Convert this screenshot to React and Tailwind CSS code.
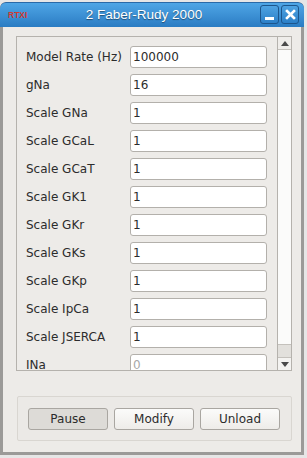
import React from "react";

const rows = [
  ["Model Rate (Hz)", "100000"],
  ["gNa", "16"],
  ["Scale GNa", "1"],
  ["Scale GCaL", "1"],
  ["Scale GCaT", "1"],
  ["Scale GK1", "1"],
  ["Scale GKr", "1"],
  ["Scale GKs", "1"],
  ["Scale GKp", "1"],
  ["Scale IpCa", "1"],
  ["Scale JSERCA", "1"],
  ["INa", "0", true],
];

const font = { fontFamily: '"DejaVu Sans", sans-serif' };

export default function App() {
  return (
    <div className="w-[307px] h-[458px] bg-[#e6e6e6] pt-[2px]" style={font}>
      <div className="w-[304px] h-[453px] flex flex-col rounded-t-[6px] overflow-hidden bg-[#9b9a98]">
        {/* title bar */}
        <div className="h-[25px] flex items-center bg-gradient-to-b from-[#4fa6e6] to-[#2a7cc3] border-t border-[#2a6aa8] rounded-t-[6px]">
          <div className="w-[28px] pl-[8px] text-[8.5px] font-bold text-[#d23a30] leading-none" style={{ fontFamily: '"Liberation Sans", sans-serif' }}>
            RTXI
          </div>
          <div className="flex-1 text-center text-white text-[13.5px] leading-none" style={{ fontFamily: '"Liberation Sans", sans-serif', textShadow: "0 1px 1px rgba(0,0,0,0.45)" }}>
            2 Faber-Rudy 2000
          </div>
          <div className="flex gap-[2px] pr-[5px] mb-[1px]">
            <div className="w-[19px] h-[19px] rounded-[3px] border border-[#1d568c] bg-gradient-to-b from-[#4ea3e2] to-[#2c80c8] flex items-end justify-center pb-[3px]">
              <div className="w-[9px] h-[3px] bg-white"></div>
            </div>
            <div className="w-[18px] h-[19px] rounded-[3px] border border-[#1d568c] bg-gradient-to-b from-[#4ea3e2] to-[#2c80c8] flex items-center justify-center">
              <svg width="11" height="11" viewBox="0 0 11 11">
                <path d="M2 2 L9 9 M9 2 L2 9" stroke="white" strokeWidth="2.6" strokeLinecap="square" />
              </svg>
            </div>
          </div>
        </div>
        {/* content */}
        <div className="flex-1 mx-[3px] mb-[3px] bg-[#edebe8] flex flex-col">
          {/* scroll area */}
          <div className="mt-[9px] ml-[13px] mr-[9px] h-[335px] border border-[#b5b2ad] flex">
            <div className="flex-1 overflow-hidden">
              <div className="flex flex-col gap-[6px] pt-[9px] pl-[9px]">
                {rows.map(([label, value, ro]) => (
                  <div key={label} className="flex items-center h-[22px] shrink-0">
                    <div className="w-[104px] text-[12px] text-[#2c2c2c] leading-none">{label}</div>
                    <div className="w-[137px] h-[22px] rounded-[3px] border border-[#b3b0ab] bg-white flex items-center pl-[2px]">
                      <span className={"text-[12px] leading-none " + (ro ? "text-[#a8a8a8]" : "text-[#2c2c2c]")}>{value}</span>
                    </div>
                  </div>
                ))}
              </div>
            </div>
            {/* scrollbar */}
            <div className="w-[14px] border-l border-[#b5b2ad] flex flex-col">
              <div className="h-[13px] bg-[#efedea] border-b border-[#c4c1bc] flex items-center justify-center">
                <svg width="8" height="5" viewBox="0 0 8 5"><path d="M0 5 L4 0 L8 5 Z" fill="#4a4a4a" /></svg>
              </div>
              <div className="flex-1 bg-[#fbfbfa]"></div>
              <div className="h-[13px] bg-[#e2e0dc] border-t border-[#c4c1bc]"></div>
              <div className="h-[13px] bg-[#f4f3f1] border-t border-[#c4c1bc] flex items-center justify-center">
                <svg width="8" height="5" viewBox="0 0 8 5"><path d="M0 0 L8 0 L4 5 Z" fill="#4a4a4a" /></svg>
              </div>
            </div>
          </div>
          {/* button group */}
          <div className="mt-[25px] ml-[14px] mr-[9px] h-[45px] border border-[#d9d6d1] rounded-[2px] bg-[#ebe9e6] flex items-center pl-[10px] gap-[6px]">
            <div className="w-[80px] h-[22px] rounded-[3px] border border-[#a9a6a1] bg-[#dddbd7] flex items-center justify-center text-[12px] text-[#2c2c2c]">Pause</div>
            <div className="w-[80px] h-[22px] rounded-[3px] border border-[#a9a6a1] bg-gradient-to-b from-[#fbfbfa] to-[#eeece9] flex items-center justify-center text-[12px] text-[#2c2c2c]">Modify</div>
            <div className="w-[80px] h-[22px] rounded-[3px] border border-[#a9a6a1] bg-gradient-to-b from-[#fbfbfa] to-[#eeece9] flex items-center justify-center text-[12px] text-[#2c2c2c]">Unload</div>
          </div>
        </div>
      </div>
    </div>
  );
}
